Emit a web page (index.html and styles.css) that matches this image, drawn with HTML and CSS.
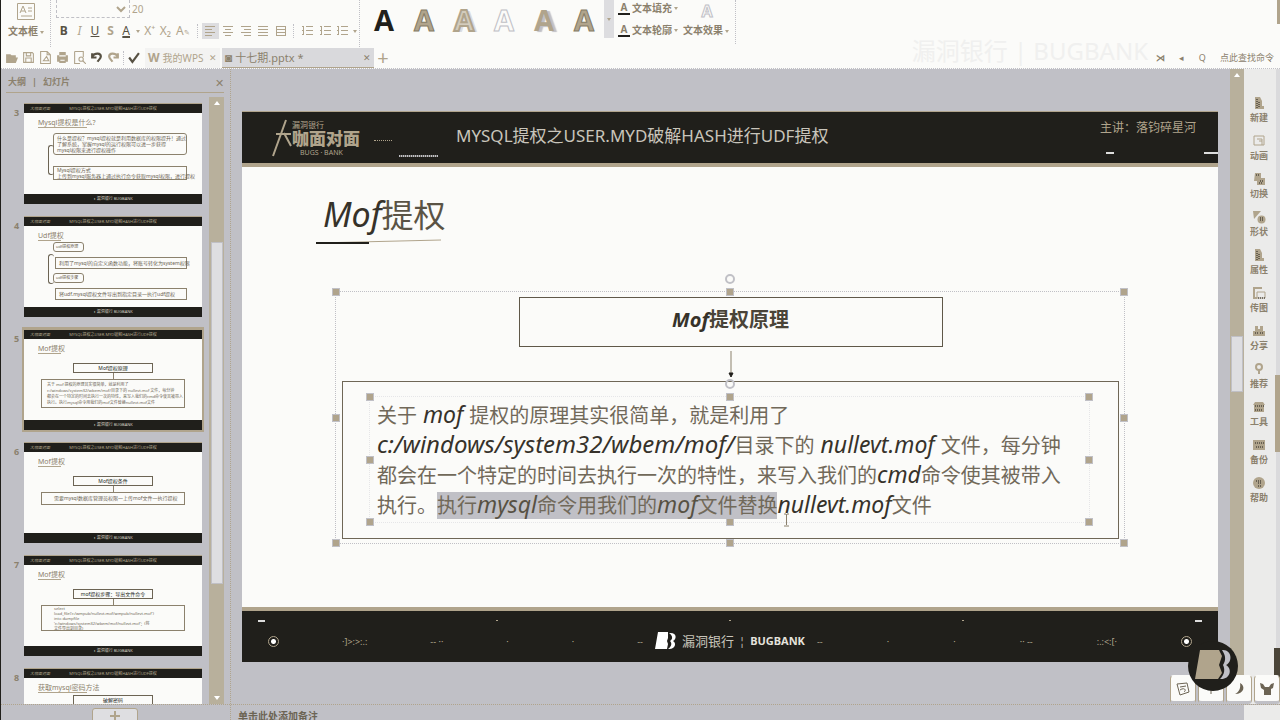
FILE: index.html
```html
<!DOCTYPE html>
<html lang="zh-CN">
<head>
<meta charset="utf-8">
<title>WPS 演示</title>
<link rel="stylesheet" href="styles.css">
</head>
<body>
<svg class="defs" aria-hidden="true">
  <symbol id="lines" viewBox="0 0 12 12"><path d="M1 1.500h10M3 4.500h6M1 7.500h10M3 10.500h6"/></symbol>
  <symbol id="left" viewBox="0 0 12 12"><path d="M1 1.500h10M1 4.500h7M1 7.500h10M1 10.500h7"/></symbol>
  <symbol id="right" viewBox="0 0 12 12"><path d="M1 1.500h10M4 4.500h7M1 7.500h10M4 10.500h7"/></symbol>
  <symbol id="full" viewBox="0 0 12 12"><path d="M1 1.500h10M1 4.500h10M1 7.500h10M1 10.500h10"/></symbol>
  <symbol id="spread" viewBox="0 0 12 12"><path d="M1 1.500h10M1 4.500h10M1 7.500h10M1 10.500h10M1.500 1v10M10.500 1v10"/></symbol>
  <symbol id="list" viewBox="0 0 12 12"><path d="M1 1.500h2M5 1.500h7M1 5.500h2M5 5.500h7M1 9.500h2M5 9.500h7M2.500 1v9"/></symbol>
  <symbol id="open" viewBox="0 0 12 12"><path class="fill" d="M1 9V3h4l1 1h4v2h2l-2 5H1z"/></symbol>
  <symbol id="save" viewBox="0 0 12 12"><path d="M1.500 1.500h8l1 1v8h-9zM4 1.500v3h4v-3M3.500 10.500v-4h5v4"/></symbol>
  <symbol id="page" viewBox="0 0 12 12"><path d="M1.500 .500h6l3 3v8h-9zM7.500 .500v3h3M4 9l3-4 2 4z"/></symbol>
  <symbol id="print" viewBox="0 0 12 12"><path class="fill" d="M3 1h6v3h2v6H9v1H3v-1H1V4h2z"/><path class="cut" d="M3 4.500h6M4 8.500h4"/></symbol>
  <symbol id="preview" viewBox="0 0 12 12"><path d="M1.500 .500h8v5M1.500 .500v11h5"/><circle cx="7.500" cy="7.500" r="2"/><path d="M9 9l3 3"/></symbol>
  <symbol id="undo" viewBox="0 0 12 12"><path class="thick" d="M2 2v4h4M2 5c3-4 8-3 8 0 0 2-2 3-3 5"/></symbol>
  <symbol id="redo" viewBox="0 0 12 12"><path class="thick" d="M10 2v4H6M10 5C7 1 2 2 2 5c0 2 2 3 3 5"/></symbol>
  <symbol id="check" viewBox="0 0 12 12"><path class="thick" d="M2 6l3 4 6-8"/></symbol>
  <symbol id="squares" viewBox="0 0 14 14"><path class="fill" d="M3 1h6v5h4v7H5V9H2z"/><path class="dots" d="M4 3h4M8 9h4M7 11h4"/></symbol>
  <symbol id="frame" viewBox="0 0 14 14"><path d="M2 2h10v9H2zM5 5h5v6M7 7h3"/></symbol>
  <symbol id="image" viewBox="0 0 14 14"><path class="heavy" d="M10 2H2v10h3"/><path d="M5 6h8v6H5z"/><path class="dots" d="M6 12h7"/></symbol>
  <symbol id="shape" viewBox="0 0 14 14"><path class="fill" d="M1 1h8L2 9z"/><circle class="fill" cx="9.500" cy="9.500" r="4"/><path class="dots" d="M8 8h4M8 10h4"/></symbol>
  <symbol id="doc" viewBox="0 0 14 14"><path class="fill" d="M3 1h5l2 4v5h2v3H3z"/><path class="dots" d="M5 3v9M7 6v5"/></symbol>
  <symbol id="people" viewBox="0 0 14 14"><path class="fill" d="M3 2h3v3h2V2h3v5h2v5H1V7h2z"/><path class="dots" d="M3 9h3M8 9h4"/></symbol>
  <symbol id="bulb" viewBox="0 0 14 14"><circle class="heavy" cx="7" cy="5" r="3"/><path class="heavy" d="M7 8v4"/></symbol>
  <symbol id="box" viewBox="0 0 14 14"><path class="fill" d="M3 2h8l2 3h-1v7H2V5H1z"/><path class="dots" d="M3 6h9M3 10h8"/></symbol>
  <symbol id="disk" viewBox="0 0 14 14"><path class="fill" d="M1 2h12v10H1z"/><path class="dots" d="M3 5h9M4 9h7"/></symbol>
  <symbol id="round" viewBox="0 0 14 14"><circle class="fill" cx="7" cy="7" r="6"/><path class="dots" d="M4 5h5M6 7h4M6 10h3"/></symbol>
</svg>

<div class="app">
  <header class="ribbon">
    <div class="group textbox">
      <svg class="tb-icon" viewBox="0 0 18 17"><path d="M.500 .500h17v16H.500z"/><path d="M3 10l3-7 3 7M4 8h4M11 5h4M11 8h4M4 13h11"/></svg>
      <button>文本框<i class="caret"></i></button>
    </div>
    <div class="group font">
      <div class="fontrow"><select aria-label="字体"><option></option></select><input aria-label="字号" value="20"></div>
      <div class="tools">
        <button class="dark"><b>B</b></button><button><i>I</i></button><button class="dark"><u>U</u></button><button><b>S</b></button><button class="under">A</button><i class="caret"></i>
        <button>X⁺</button><button>X₂</button><button class="wide">A<small>&#9998;</small></button>
        <span class="sep"></span>
        <button class="on" aria-label="左对齐"><svg><use href="#left"/></svg></button><button aria-label="居中"><svg><use href="#lines"/></svg></button><button aria-label="右对齐"><svg><use href="#right"/></svg></button><button aria-label="两端对齐"><svg><use href="#full"/></svg></button><button aria-label="分散对齐"><svg><use href="#spread"/></svg></button>
        <span class="sep"></span>
        <button aria-label="编号"><svg><use href="#list"/></svg></button><button aria-label="项目符号"><svg><use href="#list"/></svg></button><button aria-label="行距"><svg><use href="#list"/></svg></button><i class="caret"></i>
      </div>
    </div>
    <div class="group arts">
      <button class="a1">A</button><button class="a2">A</button><button class="a3">A</button><button class="a4">A</button><button class="a5">A</button><button class="a6">A</button>
      <span class="more"><i class="caret"></i></span>
    </div>
    <div class="group effects">
      <div class="fx-col">
        <button><span class="ua">A</span>文本填充<i class="caret"></i></button>
        <button><span class="ua">A</span>文本轮廓<i class="caret"></i></button>
      </div>
      <button class="fx"><span class="ghost">A</span><span>文本效果<i class="caret"></i></span></button>
    </div>
  </header>

  <nav class="tabs">
    <div class="quick">
      <button aria-label="打开"><svg><use href="#open"/></svg></button><button aria-label="保存"><svg><use href="#save"/></svg></button><button aria-label="输出"><svg><use href="#page"/></svg></button><button aria-label="打印"><svg><use href="#print"/></svg></button><button aria-label="预览"><svg><use href="#preview"/></svg></button><button class="dark" aria-label="撤销"><svg><use href="#undo"/></svg></button><button aria-label="重做"><svg><use href="#redo"/></svg></button><span class="sep"></span><button class="dark" aria-label="选项"><svg><use href="#check"/></svg></button>
    </div>
    <div class="tab"><b>W</b><span>我的WPS</span><button aria-label="关闭">✕</button></div>
    <div class="tab active"><b>◙</b><span>十七期.pptx *</span><button aria-label="关闭">✕</button></div>
    <button class="plus" aria-label="新建">+</button>
    <div class="mark">漏洞银行 | BUGBANK</div>
    <div class="find"><b>⋊</b><span>◂</span><span>Q</span><span>点此查找命令</span></div>
  </nav>

  <main class="work">
    <aside class="outline">
      <div class="outline-head"><span>大纲</span><span class="bar">|</span><span>幻灯片</span><button aria-label="关闭">✕</button></div>
      <div class="outline-body">
        <ol class="thumbs">
          <li><span class="num">3</span><div class="thumb">
            <div class="th-top"><em>大咖面对面</em><span>MYSQL提权之USER.MYD破解HASH进行UDF提权</span><em></em></div>
            <div class="th-main"><h3>Mysql提权是什么?</h3>
              <div class="tree"><p class="first">什么是提权？mysql提权就是利用数据库的权限提升！通过<br>了解系统，掌握mysql的运行权限可以进一步获得<br>mysql权限来进行提权操作</p><p class="flat">Mysql提权方式<br>上传到mysql服务器上通过执行命令获取mysql权限，进行提权</p></div></div>
            <div class="th-foot">◗ 漏洞银行 BUGBANK</div></div></li>
          <li><span class="num">4</span><div class="thumb">
            <div class="th-top"><em>大咖面对面</em><span>MYSQL提权之USER.MYD破解HASH进行UDF提权</span><em></em></div>
            <div class="th-main"><h3 class="short">Udf提权</h3>
              <div class="tree four"><p class="pill">udf提权原理</p><p>利用了mysql的自定义函数功能，将账号转化为system权限</p><p class="pill">udf提权步骤</p><p>将udf.mysql提权文件导出到指定目录—执行udf提权</p></div></div>
            <div class="th-foot">◗ 漏洞银行 BUGBANK</div></div></li>
          <li><span class="num">5</span><div class="thumb selected">
            <div class="th-top"><em>大咖面对面</em><span>MYSQL提权之USER.MYD破解HASH进行UDF提权</span><em></em></div>
            <div class="th-main"><h3 class="short">Mof提权</h3><p class="cap">Mof提权原理</p><i class="down"></i>
              <p class="desc small">关于 mof 提权的原理其实很简单，就是利用了<br>c:/windows/system32/wbem/mof/目录下的 nullevt.mof 文件，每分钟<br>都会在一个特定的时间去执行一次的特性，来写入我们的cmd命令使其被带入<br>执行。执行mysql命令用我们的mof文件替换nullevt.mof文件</p></div>
            <div class="th-foot">◗ 漏洞银行 BUGBANK</div></div></li>
          <li><span class="num">6</span><div class="thumb">
            <div class="th-top"><em>大咖面对面</em><span>MYSQL提权之USER.MYD破解HASH进行UDF提权</span><em></em></div>
            <div class="th-main"><h3 class="short">Mof提权</h3><p class="cap">Mof提权条件</p><i class="down"></i>
              <p class="desc one">需要mysql数据库管理员权限—上传mof文件—执行提权</p></div>
            <div class="th-foot">◗ 漏洞银行 BUGBANK</div></div></li>
          <li><span class="num">7</span><div class="thumb">
            <div class="th-top"><em>大咖面对面</em><span>MYSQL提权之USER.MYD破解HASH进行UDF提权</span><em></em></div>
            <div class="th-main"><h3 class="short">Mof提权</h3><p class="cap">mof提权步骤：导出文件命令</p><i class="down"></i>
              <p class="desc code">select<br>load_file('c:/wmpub/nullevt.mof/wmpub/nullevt.mof')<br>into dumpfile<br>'c:/windows/system32/wbem/mof/nullevt.mof';&nbsp; (将<br>文件导出到目录)</p></div>
            <div class="th-foot">◗ 漏洞银行 BUGBANK</div></div></li>
          <li><span class="num">8</span><div class="thumb">
            <div class="th-top"><em>大咖面对面</em><span>MYSQL提权之USER.MYD破解HASH进行UDF提权</span><em></em></div>
            <div class="th-main"><h3>获取mysql密码方法</h3><p class="cap near">破解密码</p></div></div></li>
        </ol>
        <div class="scroll left-scroll"><i class="up"></i><span class="grip"></span><i class="dn"></i></div>
      </div>
    </aside>

    <section class="canvas">
      <article class="slide">
        <header class="slide-top">
          <div class="logo"><svg viewBox="0 0 20 38" aria-hidden="true"><path d="M14 1L1 37M4 15h15M12 14l7 13"/></svg><div><small>漏洞银行</small><strong>咖面对面</strong><small class="sub">BUGS · BANK</small></div></div>
          <div class="dashes"><span class="faint"></span><span class="dash"></span></div>
          <h1>MYSQL提权之USER.MYD破解HASH进行UDF提权</h1>
          <div class="speaker">主讲：落钧碎星河<div><span></span><span class="last"></span></div></div>
        </header>
        <div class="slide-body">
          <h2><span class="hand">Mof</span>提权</h2>
          <svg class="stroke" viewBox="0 0 126 6" aria-hidden="true"><path class="s2" d="M0 4L125 1"/><path class="s1" d="M0 4H53"/></svg>
          <div class="group-frame">
            <i class="h tl"></i><i class="h tc"></i><i class="h tr"></i><i class="h ml"></i><i class="h mr"></i><i class="h bl"></i><i class="h bc"></i><i class="h br"></i><i class="rot"></i>
            <div class="node"><span class="hand">Mof</span>提权原理</div>
            <svg class="arrow" viewBox="0 0 10 34" aria-hidden="true"><path d="M5 4v23"/><path class="tip" d="M3 26h4l-2 4z"/></svg>
            <div class="panel">
              <div class="text-frame">
                <i class="h tl"></i><i class="h tc"></i><i class="h tr"></i><i class="h ml"></i><i class="h mr"></i><i class="h bl"></i><i class="h bc"></i><i class="h br"></i><i class="rot"></i>
                <p>关于<span class="hand"> mof </span>提权的原理其实很简单，就是利用了<br><span class="hand path">c:/windows/system32/wbem/mof/</span>目录下的<span class="hand"> nullevt.mof </span>文件，每分钟<br>都会在一个特定的时间去执行一次的特性，来写入我们的<span class="hand">cmd</span>命令使其被带入<br>执行。<mark>执行<span class="hand">mysql</span>命令用我们的<span class="hand">mof</span>文件替换</mark><span class="hand">nullevt.mof</span>文件</p>
                <svg class="ibeam" viewBox="0 0 7 14" aria-hidden="true"><path d="M1 1h2l.500 1 .500-1h2M3.500 2v10M1 13h5"/></svg>
              </div>
            </div>
          </div>
        </div>
        <footer class="slide-foot">
          <div class="strip"><span class="bright"></span><span></span><span></span><span></span><span class="bright"></span></div>
          <div class="foot-row">
            <div class="half"><i class="target"></i><span class="ticks">·]&gt;:&gt;:.:</span><span>-- ··</span><span>·</span><span>·</span><span>--</span></div>
            <div class="bank"><svg viewBox="0 0 22 18" aria-hidden="true"><path d="M3 0h10v6l-1 3 1 3-1 5H0z"/><path d="M14 1c8-1 8 6 4 8 4 2 2 9-5 8 4-3 4-6 2-8 3-2 3-5-1-8z"/></svg><span>漏洞银行</span><span class="pipe">¦</span><b>BUGBANK</b></div>
            <div class="half"><span>--</span><span>·</span><span>·</span><span>·· --</span><span class="ticks">:.:&lt;:[·</span><i class="target"></i></div>
          </div>
        </footer>
      </article>
    </section>

    <div class="scroll right-scroll"><i class="up"></i><span class="grip"></span></div>
    <aside class="side">
      <button><svg><use href="#doc"/></svg>新建</button>
      <button><svg><use href="#frame"/></svg>动画</button>
      <button><svg><use href="#squares"/></svg>切换</button>
      <button><svg><use href="#shape"/></svg>形状</button>
      <button><svg><use href="#doc"/></svg>属性</button>
      <button><svg><use href="#image"/></svg>传图</button>
      <button><svg><use href="#people"/></svg>分享</button>
      <button><svg><use href="#bulb"/></svg>推荐</button>
      <button><svg><use href="#box"/></svg>工具</button>
      <button><svg><use href="#disk"/></svg>备份</button>
      <button><svg><use href="#round"/></svg>帮助</button>
    </aside>
  </main>

  <footer class="status"><div class="add-wrap"><button aria-label="新建幻灯片"><svg viewBox="0 0 12 12"><path d="M6 1v10M1 6h10"/></svg></button></div><div class="notes">单击此处添加备注</div><div class="status-end"></div></footer>

  <i class="edge edge-top"></i><i class="edge edge-mid"></i><i class="edge edge-low"></i>
  <div class="ime">
    <svg class="ball" viewBox="0 0 50 50" aria-hidden="true"><circle cx="25" cy="25" r="25"/><path class="tan" d="M12 9h19l3 6-3 9 3 8-4 6H7z"/><path class="gray" d="M34 9c10-1 11 12 4 15 7 4 4 15-6 14 5-5 5-10 3-14 3-5 3-9-1-15z"/></svg>
    <span><svg viewBox="0 0 16 16" aria-hidden="true"><path d="M2 3l10-1 2 9-9 3zM5 6l6-1M5 9c4-3 7 0 4 2"/></svg></span><span><svg viewBox="0 0 16 16" aria-hidden="true"><path d="M8 9v4"/></svg></span><span><svg viewBox="0 0 16 16" aria-hidden="true"><path class="fill" d="M9 2c6 3 4 11-5 11 4-2 6-6 5-11z"/></svg></span><span><svg viewBox="0 0 16 16" aria-hidden="true"><path class="fill" d="M1 2l3 1 2 3h4l2-3 3-1-1 5-2 1v6H5V9L2 7z"/></svg></span>
  </div>
</div>
</body>
</html>
```
FILE: styles.css
```css
:root { --paper: #fbfbf9; --gray: #c0c0c6; --tan: #b0a48c; --ink: #201f1b; --brown: #8b816d; }
* { box-sizing: border-box; }
body { margin: 0; background: var(--gray); color: var(--brown); font-family: "Noto Sans", "Noto Sans CJK SC", sans-serif; font-size: 11px; }
button, input, select { font: inherit; color: inherit; background: none; border: 0; padding: 0; margin: 0; }
h1, h2, h3, p, ol { margin: 0; padding: 0; font-weight: normal; }
svg { fill: none; stroke: currentColor; stroke-width: 1; display: block; }
.defs { display: none; }
.fill { fill: currentColor; stroke: none; }
.cut { stroke: var(--paper); }
.dots { stroke: var(--ink); stroke-dasharray: 1 1; }
.thick, .heavy { stroke-width: 2; }
.app { position: relative; height: 100vh; display: flex; flex-direction: column; overflow: hidden; }
.app::before { content: ""; position: absolute; left: 0; top: 0; bottom: 0; width: 1px; background: var(--ink); }
.caret { display: inline-block; flex: none; border: 2px solid transparent; border-top: 3px solid var(--tan); border-bottom: 0; margin: 0 2px; vertical-align: middle; }

.ribbon { flex: none; height: 47px; display: flex; background: var(--paper); color: var(--tan); }
.group { display: flex; flex: none; }
.textbox { width: 51px; flex-direction: column; align-items: flex-start; padding: 3px 0 0 8px; gap: 3px; border-right: 1px dotted var(--gray); }
.textbox button { line-height: 16px; font-size: 10px; color: var(--brown); white-space: nowrap; font-weight: bold; }
.tb-icon { width: 18px; height: 17px; margin-left: 9px; }
.font { flex-direction: column; width: 308px; padding-left: 5px; gap: 4px; }
.fontrow { display: flex; height: 18px; }
.fontrow select { width: 74px; border: 1px dashed var(--gray); border-top: 0; }
.fontrow input { width: 18px; padding-left: 2px; font-size: 10px; }
.tools { display: flex; align-items: center; height: 18px; font-size: 12px; }
.tools button { width: 16px; height: 16px; line-height: 16px; text-align: center; }
.tools .wide { width: 20px; }
.tools small { font-size: 7px; }
.tools svg { width: 12px; height: 12px; margin: 0 auto; }
.sep { width: 1px; height: 14px; margin: 0 4px; border-left: 1px dotted var(--gray); }
.tools .sep ~ button { width: 18px; }
.tools .on { background: #dddde0; }
.dark { color: #575143; }
.under { text-decoration: underline 2px; color: #575143; }
.arts { align-items: flex-start; font-family: "Open Sans", sans-serif; font-size: 29px; font-weight: bold; padding-left: 4px; border-left: 1px dotted var(--gray); }
.arts button { width: 40px; height: 40px; line-height: 40px; text-align: center; }
.a1 { color: var(--ink); }
.a2, .a6 { color: var(--tan); -webkit-text-stroke: 1px #857b66; }
.a3 { color: #d3ccbd; -webkit-text-stroke: 2px var(--tan); text-shadow: 3px 1px 0 #dcdce0; }
.a4 { color: var(--paper); -webkit-text-stroke: 1px var(--gray); }
.a5 { text-shadow: 3px 1px 1px var(--gray); }
.more { width: 10px; height: 38px; background: #dddde0; display: flex; align-items: center; justify-content: center; }
.effects { padding-left: 4px; gap: 3px; border-right: 1px dotted var(--gray); height: 44px; width: 122px; font-size: 10px; font-weight: bold; color: var(--brown); }
.fx-col { display: flex; flex-direction: column; gap: 6px; }
.effects button { white-space: nowrap; line-height: 16px; height: 16px; display: flex; align-items: center; }
.effects .fx { height: 38px; flex-direction: column; justify-content: space-between; }
.ua { display: inline-block; line-height: 11px; width: 12px; margin-right: 2px; border-bottom: 2px solid var(--ink); text-align: center; }
.ghost { font-size: 16px; line-height: 22px; color: var(--paper); -webkit-text-stroke: 1px var(--gray); }

.tabs { flex: none; height: 22px; display: flex; align-items: center; background: var(--paper); color: var(--tan); border-bottom: 1px dotted var(--gray); }
.quick { display: flex; align-items: center; width: 145px; padding-left: 3px; }
.quick button { width: 17px; }
.quick svg { width: 13px; height: 13px; margin: auto; }
.quick .sep { margin: 0 1px; }
.tab { height: 20px; width: 75px; display: flex; align-items: center; gap: 3px; padding: 0 3px; background: #f3f3f2; white-space: nowrap; flex: none; font-size: 10px; }
.tab span { flex: 1; }
.tab b { font-size: 12px; }
.tab.active { width: 152px; background: #d9d9dc; border-bottom: 1px solid var(--tan); color: var(--brown); margin-left: 2px; font-size: 11px; }
.tab button { font-size: 9px; }
.plus { font-size: 20px; line-height: 20px; width: 18px; }
.mark { margin-left: auto; font-size: 24px; line-height: 22px; height: 36px; color: #f0f0ef; white-space: nowrap; }
.find { display: flex; width: 124px; margin-left: 8px; font-size: 9px; white-space: nowrap; align-items: center; justify-content: space-between; padding-right: 6px; color: var(--brown); }

.work { flex: 1; min-height: 0; display: flex; }
.outline { flex: none; width: 231px; display: flex; flex-direction: column; border-right: 1px dotted var(--tan); }
.outline-head { height: 24px; flex: none; margin: 0 6px; padding: 4px 0 0 2px; border-bottom: 1px solid var(--tan); display: flex; gap: 6px; line-height: 18px; font-size: 9px; }
.outline-head span { font-weight: bold; }
.outline-head button { margin-left: auto; color: var(--brown); font-size: 11px; }
.outline-body { flex: 1; min-height: 0; display: flex; }
.thumbs { flex: 1; list-style: none; padding-top: 10px; display: flex; flex-direction: column; gap: 12px; overflow: hidden; }
.thumbs li { display: flex; flex: none; height: 101px; padding-left: 14px; }
.num { width: 10px; font-size: 9px; line-height: 20px; font-weight: bold; }
.thumb { width: 178px; height: 101px; background: var(--paper); display: flex; flex-direction: column; font-size: 5px; line-height: 6px; color: #6c6454; white-space: nowrap; }
.selected { outline: 2px solid var(--tan); }
.th-top { flex: none; height: 10px; background: var(--ink); color: var(--tan); display: flex; justify-content: space-between; padding: 2px 6px; font-size: 4px; line-height: 5px; border-top: 1px solid var(--tan); }
.th-top em { width: 26px; }
.th-foot { flex: none; height: 10px; background: var(--ink); color: #d5cfc1; text-align: center; line-height: 10px; font-size: 4px; }
.th-main { flex: 1; min-height: 0; padding: 5px 14px 0; }
.th-main h3 { font-size: 7px; line-height: 9px; width: 49px; border-bottom: 1px solid var(--tan); color: var(--brown); }
.th-main h3.short { width: 23px; }
.tree { margin: 5px 0 0 10px; padding-left: 5px; position: relative; width: 142px; }
.tree::before { content: ""; position: absolute; left: 0; top: 12px; width: 5px; height: 28px; border: 1px solid #6c6454; border-right: 0; border-radius: 4px; }
.tree p { border: 1px solid var(--brown); padding: 0 3px; width: 134px; border-radius: 3px; }
.tree .flat { margin-top: 11px; border-radius: 0; }
.four { margin-top: 1px; }
.four p { margin: 5px 0 0 2px; height: 12px; line-height: 10px; width: 132px; border-radius: 0; }
.four p.pill { width: 31px; height: 10px; line-height: 8px; margin: 4px 0 0; border-radius: 3px; padding: 0 2px; font-size: 4px; }
.four p.pill:first-child { margin-top: 0; }
.tree .first { padding: 1px 3px; }
.cap { width: 80px; height: 10px; line-height: 8px; margin: 9px auto 0; border: 1px solid #6c6454; text-align: center; color: var(--ink); }
.cap.near { margin-top: 2px; }
.down { display: block; width: 1px; height: 6px; margin: 0 auto; background: var(--brown); }
.desc { width: 144px; height: 29px; margin: 0 auto; border: 1px solid var(--brown); padding: 2px 5px; }
.desc.small { font-size: 4px; }
.desc.one { height: 13px; line-height: 10px; padding: 0 12px; }
.desc.code { height: 26px; padding: 0 12px; line-height: 5px; font-size: 4px; }
.scroll { flex: none; width: 14px; background: #b8b09c; display: flex; flex-direction: column; align-items: center; padding: 4px 0; }
.left-scroll { width: 15px; margin: 4px 6px 0 0; }
.grip { width: 10px; background: #dedee1; outline: 1px solid var(--gray); }
.left-scroll .grip { height: 340px; margin: 138px 0 auto; }
.up, .dn { border: 3px solid transparent; border-bottom: 4px solid white; border-top: 0; flex: none; }
.dn { border-bottom: 0; border-top: 4px solid white; }

.canvas { flex: 1; min-width: 0; padding: 42px 12px 42px 11px; }
.slide { background: var(--paper); display: flex; flex-direction: column; color: #5f5849; }
.slide-top { flex: none; height: 56px; background: var(--ink); border-bottom: 4px solid var(--tan); border-top: 1px solid var(--tan); display: flex; color: #c9c5bb; }
.logo { display: flex; width: 122px; padding: 7px 0 0 30px; color: var(--tan); }
.logo svg { width: 20px; height: 38px; stroke-width: 2; flex: none; }
.logo div { display: flex; flex-direction: column; white-space: nowrap; }
.logo small { font-size: 8px; line-height: 11px; }
.logo strong { font-size: 17px; line-height: 18px; font-weight: 900; }
.logo .sub { font-size: 7px; line-height: 9px; padding-left: 8px; }
.dashes { width: 64px; margin: 28px 18px 0 10px; display: flex; flex-direction: column; gap: 14px; }
.faint { width: 18px; border-top: 1px dotted var(--tan); }
.dash { width: 39px; height: 2px; margin-left: auto; background: repeating-linear-gradient(90deg, var(--gray) 0 1px, #66645f 1px 2px); }
.slide-top h1 { font-size: 17px; line-height: 24px; margin-top: 12px; white-space: nowrap; }
.speaker { margin: 7px 0 0 auto; font-size: 12px; line-height: 18px; color: var(--tan); white-space: nowrap; width: 118px; }
.speaker div { display: flex; justify-content: space-between; margin: 15px 0 0 6px; }
.speaker div span { width: 8px; height: 2px; background: #ddd; }
.speaker .last { width: 14px; }
.slide-body { padding: 24px 93px 63px; }
.slide-body h2 { font-size: 32px; line-height: 48px; margin-left: -12px; color: #5a5345; font-weight: 400; }
.slide-body h2 .hand { font-size: 34px; line-height: 40px; }
.hand { font-family: "Noto Sans", sans-serif; font-style: italic; color: #36322a; font-weight: 400; }
.stroke { width: 126px; height: 6px; margin-left: -19px; }
.s1 { stroke: var(--ink); stroke-width: 2; }
.s2 { stroke: var(--tan); }
.group-frame { position: relative; margin-top: 46px; border: 1px dotted var(--gray); padding: 5px 5px 4px 6px; }
.node { width: 424px; max-width: 100%; height: 50px; line-height: 44px; margin: 0 auto; border: 1px solid #5f5849; text-align: center; font-size: 20px; font-weight: bold; color: #4a4438; }
.node .hand { font-weight: bold; }
.arrow { width: 10px; height: 34px; margin: 0 auto; stroke: var(--brown); }
.tip { fill: var(--ink); stroke: var(--ink); }
.panel { border: 1px solid #6f6757; padding: 14px 28px 15px 26px; }
.text-frame { position: relative; padding: 4px 0 1px 7px; border: 1px dotted #e6e6e8; }
.text-frame p { font-size: 20px; line-height: 30px; white-space: nowrap; font-weight: 400; color: #71695a; }
.text-frame .hand { font-size: 23px; line-height: 20px; }
.text-frame .path { font-size: 24px; }
mark { background: var(--gray); color: inherit; }
mark .hand { color: #575143; }
.h { position: absolute; width: 6px; height: 6px; background: var(--tan); outline: 1px solid var(--gray); }
.tl, .ml, .bl { left: -3px; }
.tc, .bc { left: calc(50% - 3px); }
.tr, .mr, .br { right: -3px; }
.tl, .tc, .tr { top: -3px; }
.ml, .mr { top: calc(50% - 3px); }
.bl, .bc, .br { bottom: -3px; }
.rot { position: absolute; left: calc(50% - 5px); top: -18px; width: 10px; height: 10px; border: 2px solid var(--gray); border-radius: 50%; }
.ibeam { position: absolute; left: 413px; top: 116px; width: 7px; height: 14px; color: var(--brown); }
.slide-foot { background: var(--ink); border-top: 4px solid var(--tan); padding: 9px 16px 11px; color: var(--tan); font-size: 9px; }
.strip { display: flex; justify-content: space-between; height: 3px; }
.strip span { width: 2px; height: 1px; background: var(--tan); }
.strip .bright { width: 7px; height: 2px; background: #ddd; }
.foot-row { display: flex; align-items: center; padding: 8px 10px 0; }
.half { flex: 1; display: flex; align-items: center; justify-content: space-between; }
.target { width: 11px; height: 11px; border: 1px solid var(--tan); border-radius: 50%; background: radial-gradient(white 2px, var(--ink) 3px); }
.bank { display: flex; align-items: center; gap: 5px; margin: 0 12px; color: #c9c5bb; font-size: 13px; line-height: 20px; white-space: nowrap; }
.bank svg { width: 22px; height: 18px; fill: white; stroke: none; }
.bank b { color: #e4e2dc; font-size: 11px; }
.pipe { font-size: 11px; }
.right-scroll .grip { height: 54px; margin-top: 260px; }
.side { flex: none; width: 36px; background: #ebebea; border-right: 4px solid #dadadc; padding: 27px 0 0; display: flex; flex-direction: column; }
.side button { height: 38px; width: 30px; display: flex; flex-direction: column; align-items: center; font-size: 9px; line-height: 13px; gap: 1px; font-weight: bold; }
.side svg { width: 14px; height: 14px; color: var(--tan); flex: none; }

.status { flex: none; height: 16px; display: flex; border-top: 1px dotted var(--tan); overflow: hidden; font-size: 10px; }
.add-wrap { width: 231px; padding: 3px 0 0 92px; border-right: 1px dotted var(--tan); }
.add-wrap button { width: 46px; height: 20px; border: 1px solid var(--tan); border-radius: 3px; background: #dedee1; color: var(--tan); }
.add-wrap svg { width: 12px; height: 12px; margin: -4px auto 0; stroke-width: 2; }
.notes { flex: 1; padding: 4px 0 0 7px; line-height: 14px; color: #6c6454; font-weight: bold; }
.status-end { width: 36px; background: #ebebea; }
.edge { position: absolute; right: 0; width: 3px; background: var(--tan); }
.edge-top { top: 0; height: 24px; }
.edge-mid { top: 375px; height: 77px; width: 5px; }
.edge-low { top: 648px; height: 44px; width: 6px; background: #4a4438; }
.ime { position: absolute; right: 0; bottom: 16px; display: flex; gap: 2px; }
.ime span { width: 26px; height: 29px; background: var(--paper); border: 1px solid var(--tan); border-top-color: var(--paper); border-bottom: 3px solid var(--gray); border-radius: 4px; display: flex; align-items: center; justify-content: center; }
.ime span svg { width: 16px; height: 16px; color: #6c6454; }
.ball { position: absolute; width: 50px; height: 50px; left: 18px; top: -34px; fill: var(--ink); stroke: none; }
.ball .tan { fill: var(--tan); }
.ball .gray { fill: var(--gray); }
```
